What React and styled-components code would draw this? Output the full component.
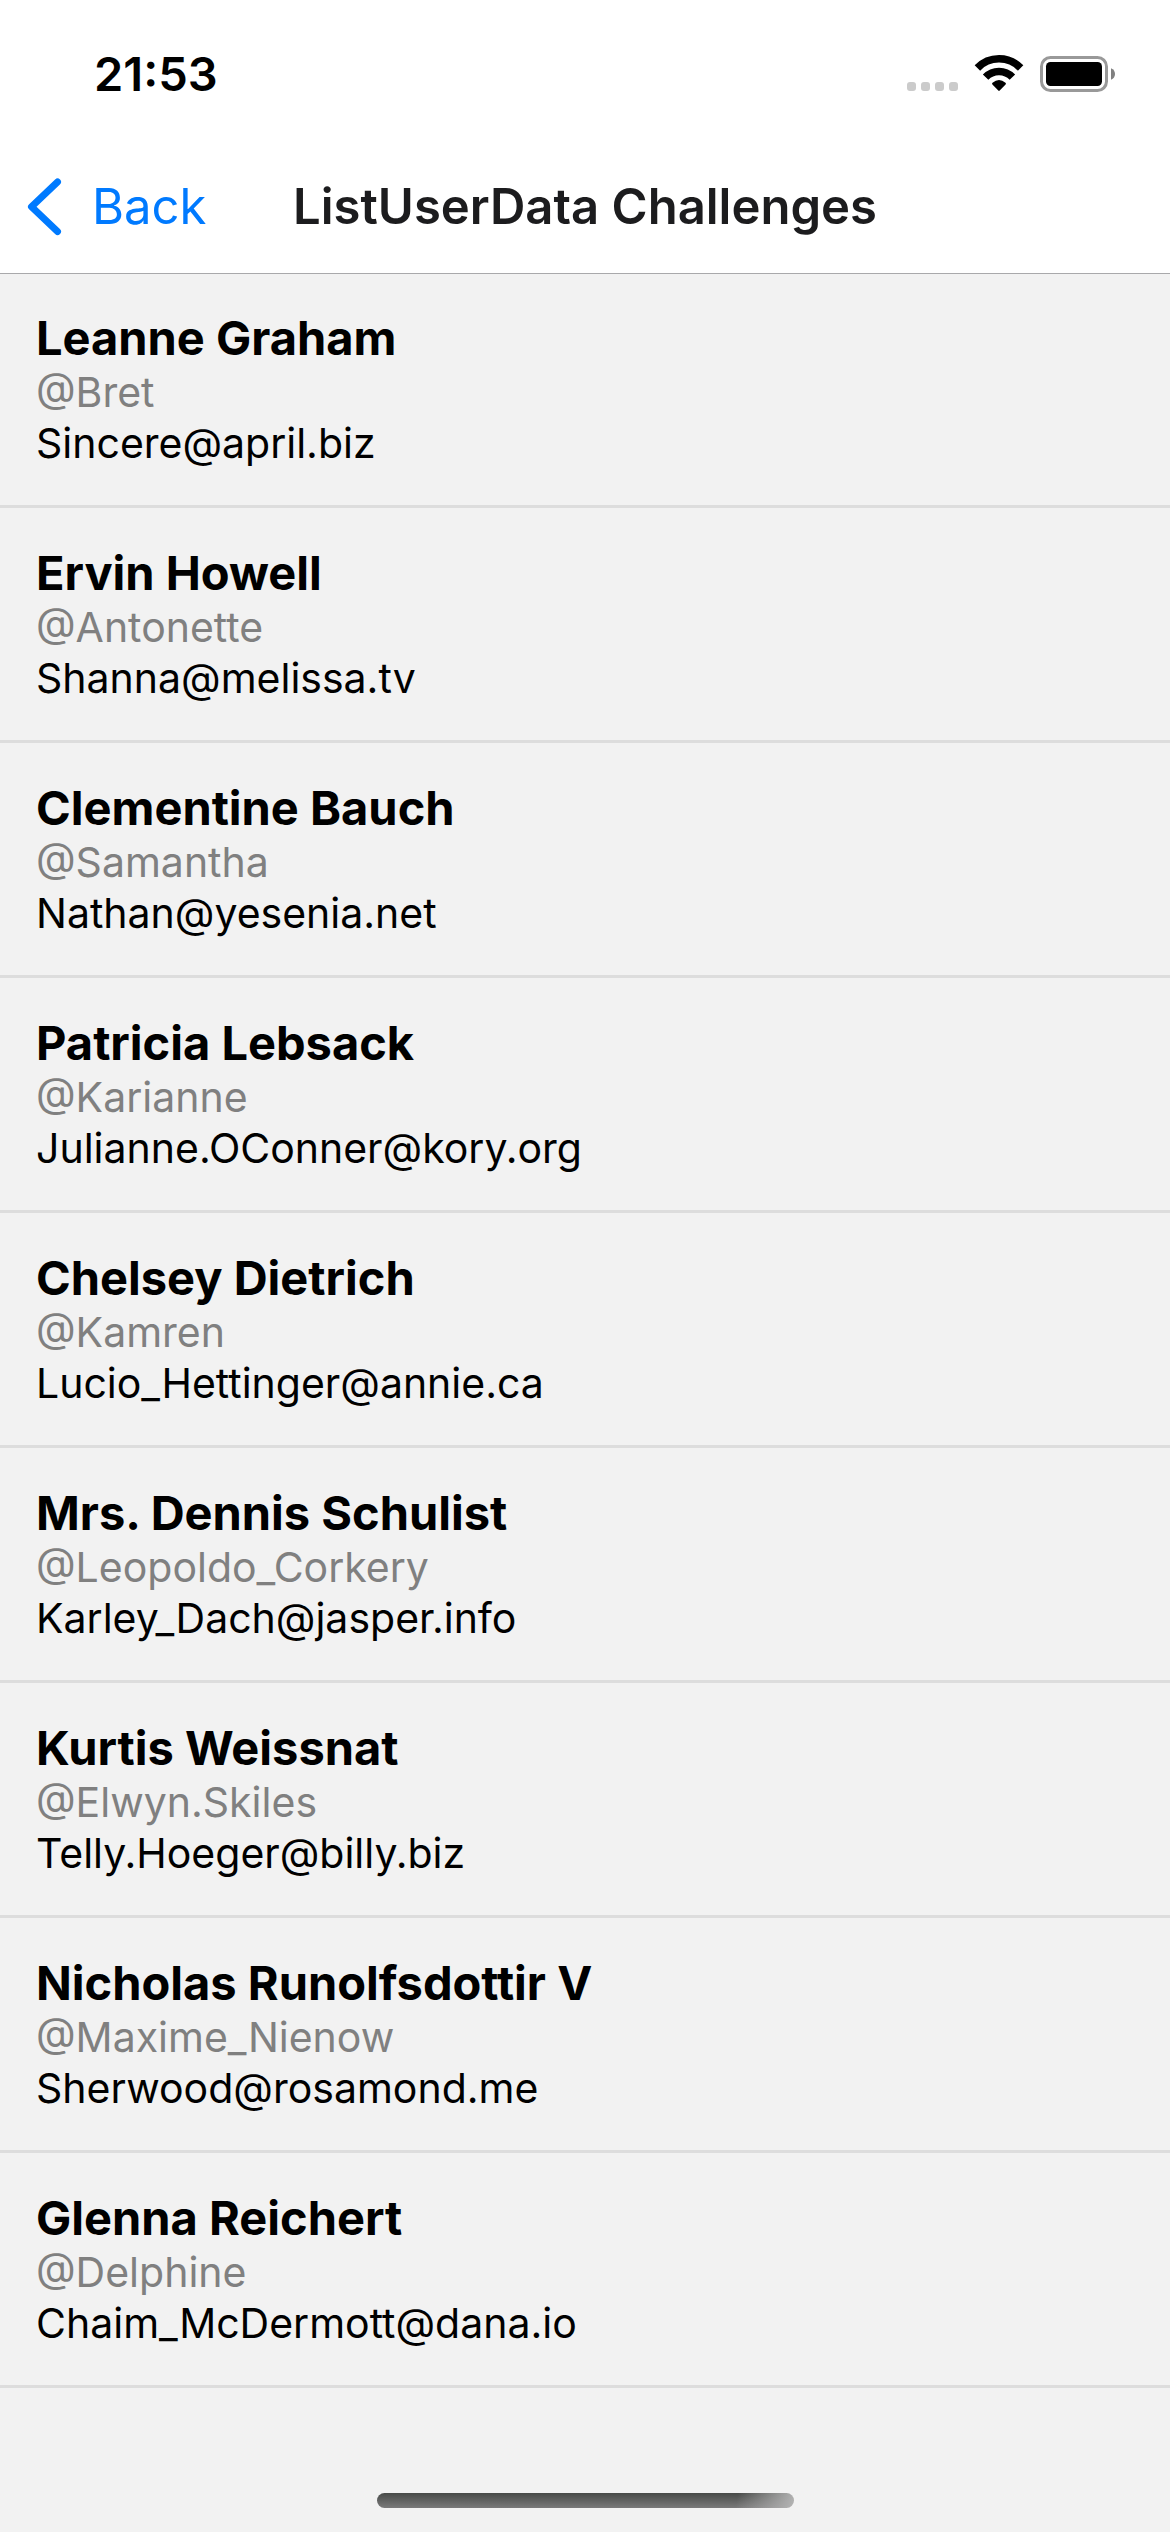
import React from "react";
import styled, { createGlobalStyle } from "styled-components";

const users = [
  ["Leanne Graham", "Bret", "Sincere@april.biz"],
  ["Ervin Howell", "Antonette", "Shanna@melissa.tv"],
  ["Clementine Bauch", "Samantha", "Nathan@yesenia.net"],
  ["Patricia Lebsack", "Karianne", "Julianne.OConner@kory.org"],
  ["Chelsey Dietrich", "Kamren", "Lucio_Hettinger@annie.ca"],
  ["Mrs. Dennis Schulist", "Leopoldo_Corkery", "Karley_Dach@jasper.info"],
  ["Kurtis Weissnat", "Elwyn.Skiles", "Telly.Hoeger@billy.biz"],
  ["Nicholas Runolfsdottir V", "Maxime_Nienow", "Sherwood@rosamond.me"],
  ["Glenna Reichert", "Delphine", "Chaim_McDermott@dana.io"],
];

const GlobalStyle = createGlobalStyle`
  * { box-sizing: border-box; }
  body { margin: 0; background: #f2f2f2; }
`;

const Screen = styled.div`
  display: flex;
  flex-direction: column;
  min-height: 100vh;
  font-family: Inter, "Liberation Sans", sans-serif;
  color: #000;
`;

const StatusBar = styled.div`
  display: flex;
  align-items: center;
  justify-content: space-between;
  height: 141px;
  padding: 7px 54px 0 94px;
  background: #fff;
`;

const Clock = styled.time`
  font-size: 47px;
  line-height: 56px;
  font-weight: 600;
`;

const StatusIcons = styled.svg`
  display: block;
  width: 212px;
  height: 40px;
`;

const NavBar = styled.header`
  display: grid;
  grid-template-columns: 1fr auto 1fr;
  align-items: center;
  height: 132px;
  padding: 0 24px;
  background: #fff;
  box-shadow: 0 1px 0 #a9a9ab;
`;

const BackButton = styled.button`
  display: flex;
  align-items: center;
  justify-self: start;
  gap: 28px;
  padding: 0;
  border: 0;
  background: none;
  color: #007aff;
  font: 400 49px/60px Inter, "Liberation Sans", sans-serif;
`;

const Title = styled.h1`
  margin: 0;
  font-size: 49px;
  line-height: 60px;
  font-weight: 600;
  color: #1c1c1e;
`;

const UserList = styled.ul`
  flex: 1;
  margin: 0;
  padding: 0;
  list-style: none;
`;

const UserRow = styled.li`
  padding: 36px;
  border-bottom: 3px solid #ddd;
`;

const Name = styled.h2`
  margin: 0;
  font-size: 47px;
  line-height: 58px;
  font-weight: 700;
`;

const Detail = styled.p`
  margin: 0;
  font-size: 41px;
  line-height: 51px;
  color: ${(p) => (p.$muted ? "#808080" : "#000")};
`;

const HomeArea = styled.footer`
  display: flex;
  justify-content: center;
  padding-bottom: 24px;
`;

const HomeIndicator = styled.div`
  width: 417px;
  height: 15px;
  border-radius: 8px;
  background:
    linear-gradient(100deg, transparent 86%, #b4b4b4 100%),
    linear-gradient(180deg, #484a48, #7a7a7a);
`;

export default function App() {
  return (
    <Screen>
      <GlobalStyle />
      <StatusBar>
        <Clock>21:53</Clock>
        <StatusIcons viewBox="0 0 212 40" aria-hidden="true">
          <g fill="#cbcbcb">
            {[3, 17, 31, 45].map((x) => (
              <rect key={x} x={x} y="28" width="9" height="9" rx="3" />
            ))}
          </g>
          <g fill="none" stroke="#000" strokeWidth="7.6">
            <path d="M73.4 14A30 30 0 0 1 116.6 14" />
            <path d="M81.6 23.2A18.6 18.6 0 0 1 108.4 23.2" />
          </g>
          <path d="M88.4 30.4Q87.6 29.6 88.5 28.8Q95 23.4 101.5 28.8Q102.4 29.6 101.6 30.4L95.7 36.6Q95 37.3 94.3 36.6Z" />
          <rect x="137.5" y="3.5" width="65" height="33" rx="9" fill="none" stroke="#999" strokeWidth="3" />
          <rect x="142" y="8" width="56" height="24" rx="4.5" />
          <path d="M207 14.2Q211 16 211 20Q211 24 207 25.8Z" fill="#808080" />
        </StatusIcons>
      </StatusBar>
      <NavBar>
        <BackButton type="button">
          <svg
            width="40"
            height="60"
            viewBox="0 0 40 60"
            fill="none"
            stroke="currentColor"
            strokeWidth="7"
            strokeLinecap="round"
            strokeLinejoin="round"
            aria-hidden="true"
          >
            <path d="M33.5 5L7.5 29.7L33.5 54.5" />
          </svg>
          Back
        </BackButton>
        <Title>ListUserData Challenges</Title>
      </NavBar>
      <UserList>
        {users.map(([name, handle, email]) => (
          <UserRow key={handle}>
            <Name>{name}</Name>
            <Detail $muted>@{handle}</Detail>
            <Detail>{email}</Detail>
          </UserRow>
        ))}
      </UserList>
      <HomeArea>
        <HomeIndicator />
      </HomeArea>
    </Screen>
  );
}
